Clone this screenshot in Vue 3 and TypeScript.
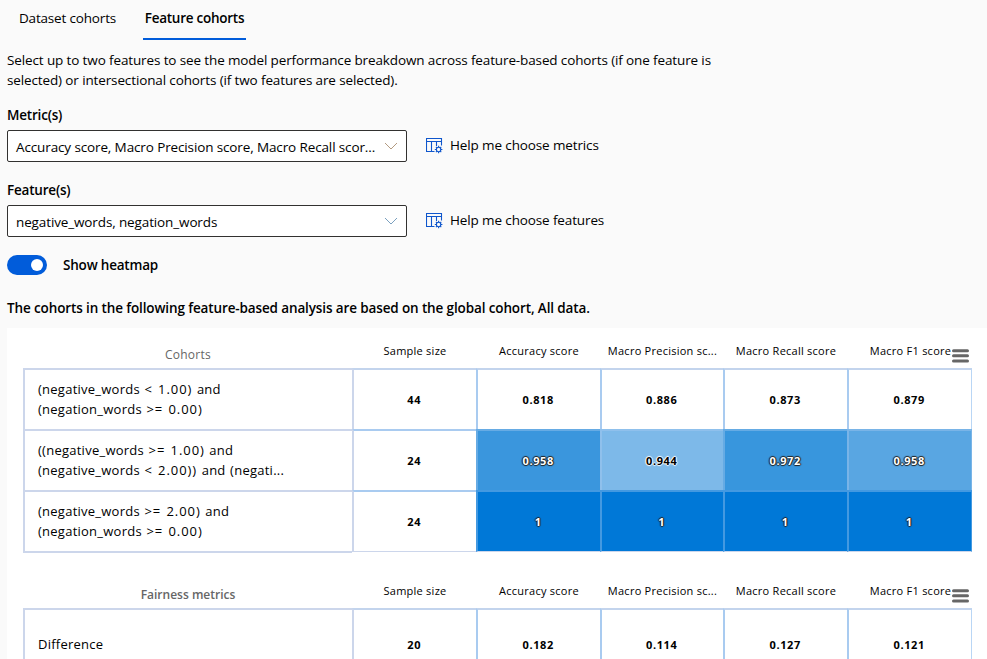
<script setup lang="ts">
import { ref } from 'vue'

interface Cell {
  value: string
  fill?: string
  tone?: 'light' | 'dark'
}

interface Row {
  label: string[]
  cells: Cell[]
}

interface Chart {
  title: string
  kind: string
  rows: Row[]
}

const tabs = ['Dataset cohorts', 'Feature cohorts']
const activeTab = ref('Feature cohorts')
const heatmap = ref(true)

const fields = [
  {
    kind: 'metric',
    label: 'Metric(s)',
    value: 'Accuracy score, Macro Precision score, Macro Recall scor...',
    help: 'Help me choose metrics',
  },
  {
    kind: 'feature',
    label: 'Feature(s)',
    value: 'negative_words, negation_words',
    help: 'Help me choose features',
  },
]

const columns = [
  'Sample size',
  'Accuracy score',
  'Macro Precision sc...',
  'Macro Recall score',
  'Macro F1 score',
]

const charts: Chart[] = [
  {
    title: 'Cohorts',
    kind: 'cohorts',
    rows: [
      {
        label: ['(negative_words < 1.00) and', '(negation_words >= 0.00)'],
        cells: [
          { value: '44' },
          { value: '0.818' },
          { value: '0.886' },
          { value: '0.873' },
          { value: '0.879' },
        ],
      },
      {
        label: ['((negative_words >= 1.00) and', '(negative_words < 2.00)) and (negati...'],
        cells: [
          { value: '24' },
          { value: '0.958', fill: '#3a96dd', tone: 'light' },
          { value: '0.944', fill: '#7db9e9', tone: 'dark' },
          { value: '0.972', fill: '#3896dd', tone: 'light' },
          { value: '0.958', fill: '#59a6e2', tone: 'light' },
        ],
      },
      {
        label: ['(negative_words >= 2.00) and', '(negation_words >= 0.00)'],
        cells: [
          { value: '24' },
          { value: '1', fill: '#0078d7', tone: 'light' },
          { value: '1', fill: '#0078d7', tone: 'light' },
          { value: '1', fill: '#0078d7', tone: 'light' },
          { value: '1', fill: '#0078d7', tone: 'light' },
        ],
      },
    ],
  },
  {
    title: 'Fairness metrics',
    kind: 'fairness',
    rows: [
      {
        label: ['Difference'],
        cells: [
          { value: '20' },
          { value: '0.182' },
          { value: '0.114' },
          { value: '0.127' },
          { value: '0.121' },
        ],
      },
    ],
  },
]

// Splits a cohort expression so that operators and numbers can be spaced wider than names.
const tokens = (line: string) =>
  line.split(/([<>=]+ [\d.]+\)+)/).map((text) => ({ text, wide: /^[<>=]/.test(text) }))
</script>

<template>
  <main class="page">
    <nav class="tabs">
      <button
        v-for="tab in tabs"
        :key="tab"
        class="tab"
        :class="{ active: tab === activeTab }"
        @click="activeTab = tab"
      >
        {{ tab }}
      </button>
    </nav>

    <p class="intro">
      <span class="line">Select up to two features to see the model performance breakdown across feature-based cohorts (if one feature is</span>
      <span class="line">selected) or intersectional cohorts (if two features are selected).</span>
    </p>

    <section v-for="field in fields" :key="field.kind" class="field">
      <div class="label">{{ field.label }}</div>
      <div class="field-row">
        <div class="select">
          <span>{{ field.value }}</span>
          <svg class="chevron" :class="field.kind" width="14" height="8" viewBox="0 0 14 8">
            <path d="M1 1l6 6 6-6" />
          </svg>
        </div>
        <div class="help">
          <svg class="help-icon" width="17" height="16" viewBox="0 0 17 16">
            <path d="M8.5 13.5H.5v-13h15v7M.5 3.5h15M5.5 3.5v10M10.5 3.5v4.5" />
            <circle cx="12.6" cy="11.5" r="2.2" />
            <path d="M12.6 7.7v1.6M12.6 13.7v1.6M8.8 11.5h1.6M14.8 11.5h1.6M9.9 8.8l1.1 1.1M14.2 13.1l1.1 1.1M9.9 14.2l1.1-1.1M14.2 9.9l1.1-1.1" />
          </svg>
          <span>{{ field.help }}</span>
        </div>
      </div>
    </section>

    <div class="toggle-row">
      <button
        class="toggle"
        :class="{ on: heatmap }"
        role="switch"
        :aria-checked="heatmap"
        @click="heatmap = !heatmap"
      >
        <span class="knob"></span>
      </button>
      <span class="toggle-label">Show heatmap</span>
    </div>

    <p class="note">The cohorts in the following feature-based analysis are based on the global cohort, All data.</p>

    <div class="panel">
      <section v-for="chart in charts" :key="chart.kind" class="chart" :class="chart.kind">
        <div class="row head">
          <div class="title">{{ chart.title }}</div>
          <div v-for="column in columns" :key="column" class="column">{{ column }}</div>
          <svg class="menu" width="17" height="14" viewBox="0 0 17 14">
            <path d="M1.5 1.7h14M1.5 6.8h14M1.5 11.9h14" />
          </svg>
        </div>
        <div v-for="(row, r) in chart.rows" :key="r" class="row">
          <div class="category">
            <div v-for="line in row.label" :key="line">
              <span v-for="(token, t) in tokens(line)" :key="t" :class="{ wide: token.wide }">{{ token.text }}</span>
            </div>
          </div>
          <div
            v-for="(cell, c) in row.cells"
            :key="c"
            class="cell"
            :class="[heatmap && cell.fill ? 'filled' : '', heatmap ? cell.tone : '']"
            :style="{ backgroundColor: heatmap ? cell.fill : undefined }"
          >
            {{ cell.value }}
          </div>
        </div>
      </section>
    </div>
  </main>
</template>

<style>
body {
  background: #fafafa;
  overflow: hidden;
}
</style>

<style scoped>
.page {
  box-sizing: border-box;
  height: 659px;
  overflow: hidden;
  padding-left: 7px;
  font-family: 'Open Sans', 'Noto Sans', sans-serif;
  font-size: 13.5px;
  line-height: 20px;
  letter-spacing: -0.125px;
  color: #000;
  white-space: nowrap;
}

button {
  border: 0;
  padding: 0;
  background: none;
  font: inherit;
  letter-spacing: inherit;
  color: inherit;
}

.tabs {
  display: flex;
  gap: 24px;
  height: 40px;
  padding-left: 9px;
}

.tab {
  box-sizing: border-box;
  width: 103px;
  height: 40px;
  padding-bottom: 3px;
  border-bottom: 2px solid transparent;
  letter-spacing: -0.17px;
}

.tab.active {
  font-weight: 600;
  letter-spacing: -0.25px;
  border-bottom-color: #015cda;
}

.intro {
  margin: 10px 0 0;
}

.line {
  display: block;
}

.field {
  margin-top: 15px;
}

.field + .field {
  margin-top: 18px;
}

.label,
.toggle-label,
.note {
  font-weight: 600;
}

.label,
.toggle-label {
  letter-spacing: -0.2px;
}

.label {
  height: 25px;
}

.field-row {
  display: flex;
}

.select {
  box-sizing: border-box;
  display: flex;
  align-items: center;
  justify-content: space-between;
  width: 400px;
  height: 32px;
  padding: 2px 8px 0;
  border: 1px solid #323130;
  border-radius: 2px;
  background: #fff;
}

.chevron {
  margin-top: -3px;
  fill: none;
  stroke: #7aa0bf;
}

.chevron.metric {
  stroke: #b39a80;
}

.help {
  display: flex;
  gap: 7px;
  height: 30px;
  padding-left: 19px;
  align-items: center;
}

.help-icon {
  margin-top: 2px;
  fill: none;
  stroke: #0f56cc;
  stroke-width: 1.1;
}

.toggle-row {
  display: flex;
  align-items: center;
  gap: 16px;
  margin-top: 18px;
}

.toggle {
  display: flex;
  align-items: center;
  box-sizing: border-box;
  width: 40px;
  height: 20px;
  padding: 0 4px;
  border-radius: 10px;
  background: #8a8886;
}

.toggle.on {
  justify-content: flex-end;
  background: #015cda;
}

.knob {
  width: 12px;
  height: 12px;
  border-radius: 50%;
  background: #fff;
}

.note {
  margin: 23px 0 10px;
}

.panel {
  padding-left: 16px;
  background: #fff;
}

.chart {
  height: 240px;
  font-size: 13px;
}

.row {
  display: grid;
  grid-template-columns: 329px 124px 124px 123px 124px 125px;
  height: 61px;
}

.row.head {
  position: relative;
  height: 40px;
}

.row:last-child {
  height: 63px;
}

.fairness .row:last-child {
  height: 74px;
}

.title {
  padding: 17px 0 0 1px;
  text-align: center;
  font-size: 12px;
  letter-spacing: 0.25px;
  color: #666;
}

.fairness .title {
  font-weight: 600;
  letter-spacing: 0;
}

.column {
  padding: 13px 0 0 2px;
  text-align: center;
  font-size: 11px;
  letter-spacing: 0.25px;
}

.menu {
  position: absolute;
  left: 929px;
  top: 20.5px;
  fill: none;
  stroke: #666;
  stroke-width: 3;
  stroke-linecap: round;
}

.category {
  display: flex;
  flex-direction: column;
  justify-content: center;
  padding: 0 0 2px 13px;
  border: 2px solid #ccd6eb;
  border-width: 2px 0 0 2px;
  letter-spacing: 0.25px;
  word-spacing: 0.9px;
  white-space: pre;
}

.wide {
  letter-spacing: 0.95px;
}

.row:last-child .category {
  border-bottom-width: 2px;
}

.cell {
  display: flex;
  align-items: center;
  justify-content: center;
  padding-right: 1.5px;
  border: 2px solid #a9cbf0;
  border-width: 2px 0 0 2px;
  font-size: 11px;
  font-weight: 700;
  letter-spacing: 0.6px;
  color: #000;
}

.cell:nth-child(2) {
  border-left-color: #ccd6eb;
}

.cell:last-child {
  border-right: 1px solid #b9d6f5;
}

.head + .row .cell {
  border-top-color: #c3d4ed;
}

.row:last-child .cell {
  border-bottom: 1px solid #ccd6eb;
  margin-bottom: 1px;
}

.filled.cell {
  border-color: rgba(169, 203, 240, 0.4);
}

.light {
  color: #fff;
  text-shadow: 1px 0 1px #222, -1px 0 1px #222, 0 1px 1px #222, 0 -1px 1px #222;
}

.dark {
  text-shadow: 1px 0 1px #fff, -1px 0 1px #fff, 0 1px 1px #fff, 0 -1px 1px #fff;
}
</style>
